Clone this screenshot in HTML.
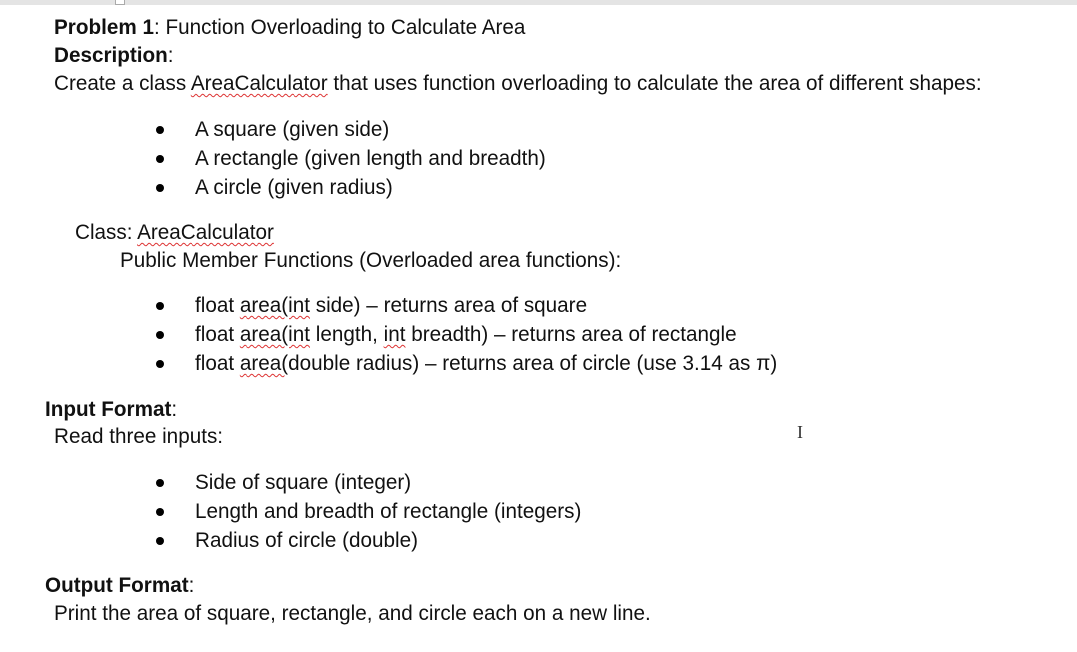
<!DOCTYPE html>
<html><head><style>
body{margin:0;width:1077px;height:652px;background:#fff;position:relative;overflow:hidden;font-family:"Liberation Sans",sans-serif;color:#111;}
.t{position:absolute;white-space:nowrap;font-size:21px;line-height:24px;transform:scaleX(0.985);transform-origin:left center;}
.b{position:absolute;width:8px;height:8px;border-radius:50%;background:#000;left:156px;}
.sq{text-decoration:underline wavy #d33;text-decoration-thickness:1px;text-underline-offset:3px;}
</style></head><body>
<div style="position:absolute;left:0;top:0;width:1077px;height:5px;background:#e4e4e4"></div>
<div style="position:absolute;left:115px;top:0;width:8px;height:4px;border:1px solid #aaa;border-top:none;background:#fff"></div>
<div class="t" style="left:54px;top:16px"><b>Problem 1</b>: Function Overloading to Calculate Area</div>
<div class="t" style="left:54px;top:44px"><b>Description</b>:</div>
<div class="t" style="left:54px;top:72px">Create a class <span class="sq">AreaCalculator</span> that uses function overloading to calculate the area of different shapes:</div>
<div class="b" style="top:126px"></div><div class="t" style="left:195px;top:118px">A square (given side)</div>
<div class="b" style="top:155px"></div><div class="t" style="left:195px;top:147px">A rectangle (given length and breadth)</div>
<div class="b" style="top:184px"></div><div class="t" style="left:195px;top:176px">A circle (given radius)</div>
<div class="t" style="left:75px;top:221px">Class: <span class="sq">AreaCalculator</span></div>
<div class="t" style="left:120px;top:249px">Public Member Functions (Overloaded area functions):</div>
<div class="b" style="top:302px"></div><div class="t" style="left:195px;top:294px">float <span class="sq">area(int</span> side) – returns area of square</div>
<div class="b" style="top:331px"></div><div class="t" style="left:195px;top:323px">float <span class="sq">area(int</span> length, <span class="sq">int</span> breadth) – returns area of rectangle</div>
<div class="b" style="top:360px"></div><div class="t" style="left:195px;top:352px">float <span class="sq">area(</span>double radius) – returns area of circle (use 3.14 as π)</div>
<div class="t" style="left:45px;top:398px"><b>Input Format</b>:</div>
<div class="t" style="left:54px;top:425px">Read three inputs:</div>
<div style="position:absolute;left:797px;top:422px;font-family:'Liberation Serif',serif;font-size:18px;color:#333">I</div>
<div class="b" style="top:479px"></div><div class="t" style="left:195px;top:471px">Side of square (integer)</div>
<div class="b" style="top:508px"></div><div class="t" style="left:195px;top:500px">Length and breadth of rectangle (integers)</div>
<div class="b" style="top:537px"></div><div class="t" style="left:195px;top:529px">Radius of circle (double)</div>
<div class="t" style="left:45px;top:574px"><b>Output Format</b>:</div>
<div class="t" style="left:54px;top:602px">Print the area of square, rectangle, and circle each on a new line.</div>
</body></html>
